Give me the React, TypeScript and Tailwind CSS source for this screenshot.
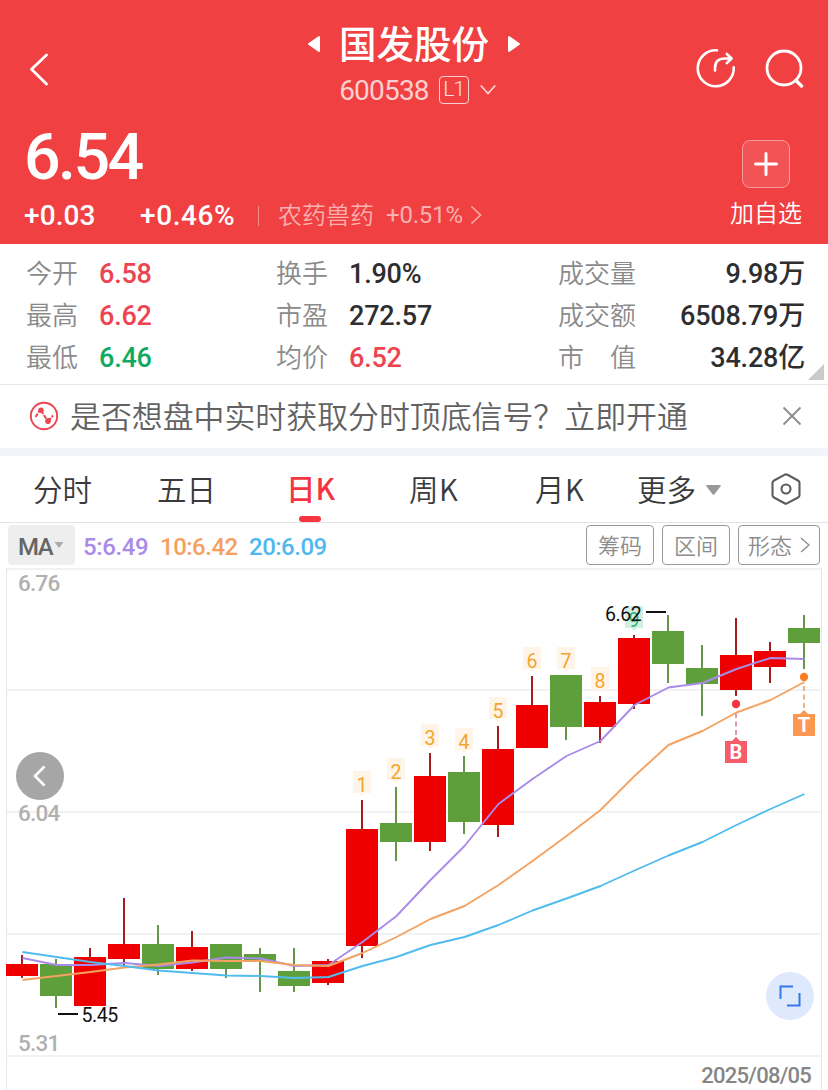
import * as React from "react";

const CJK = "font-['Noto_Sans_CJK_SC',sans-serif]";
const NUM = "font-['Roboto','Noto_Sans_CJK_SC',sans-serif]";

type Candle = {
  up: boolean;
  high: number;
  top: number;
  bottom: number;
  low: number;
};

const candle = (
  up: boolean,
  high: number,
  top: number,
  bottom: number,
  low: number
): Candle => ({ up, high, top, bottom, low });

const candles: Candle[] = [
  candle(true, 955, 964, 976, 978),
  candle(false, 959, 964, 996, 1008),
  candle(true, 948, 957, 1006, 1006),
  candle(true, 898, 944, 959, 968),
  candle(false, 925, 944, 969, 975),
  candle(true, 931, 947, 969, 971),
  candle(false, 944, 944, 969, 978),
  candle(false, 948, 954, 962, 992),
  candle(false, 948, 971, 986, 992),
  candle(true, 959, 961, 983, 985),
  candle(true, 800, 829, 946, 958),
  candle(false, 787, 823, 842, 861),
  candle(true, 753, 776, 842, 851),
  candle(false, 756, 772, 822, 834),
  candle(true, 726, 749, 825, 837),
  candle(true, 676, 705, 748, 748),
  candle(false, 675, 675, 727, 740),
  candle(true, 696, 702, 727, 743),
  candle(true, 635, 638, 704, 709),
  candle(false, 615, 631, 664, 683),
  candle(false, 645, 668, 684, 716),
  candle(true, 618, 655, 690, 696),
  candle(true, 642, 651, 667, 683),
  candle(false, 615, 628, 643, 669),
];

const averages = [
  {
    color: "#a98be8",
    values: [
      958, 965, 965, 963, 966, 962.5, 957.5, 958.5, 966, 965, 942, 916, 880,
      846, 804, 779, 756, 741, 705, 687.5, 683, 669, 658, 659,
    ],
  },
  {
    color: "#f3a261",
    values: [
      980, 976, 972, 967.5, 964.5, 960.5, 961, 961, 965, 966, 953, 937, 919,
      906, 885, 861, 836, 810, 776, 745, 731, 712.5, 700, 682,
    ],
  },
  {
    color: "#50bcee",
    values: [
      952, 957, 962, 966, 970.5, 973, 975.5, 976, 978, 977, 966, 957, 945, 937,
      925, 910.5, 898.5, 886, 870.5, 855.5, 842, 825, 809, 794,
    ],
  },
];

// top edge of every sequence badge, starting from candle 10
const badges = [771, 758, 724, 728, 697, 647, 647, 667, 606];

const centerX = (i: number) => 22 + i * 34;

function Header() {
  return (
    <header className="h-[244px] bg-[#f04042] text-white">
      <div className="flex h-[124px] justify-between">
        <div className="w-[168px]">
          <svg className="ml-7 mt-[50px] h-10 w-6" viewBox="0 0 24 40" fill="none" stroke="#fff" strokeWidth="2.8" strokeLinecap="round" strokeLinejoin="round">
            <path d="M18.5 5 3.500 19.200 18.500 34" />
          </svg>
        </div>
        <div className="flex flex-col items-center">
          <div className="mt-[16px] flex h-[52px] items-center gap-[18px]">
            <svg className="mt-[4px] h-[18px] w-4" viewBox="0 0 16 18" fill="#fff" stroke="#fff" strokeWidth="2" strokeLinejoin="round">
              <path d="M14 2v14L4 9z" />
            </svg>
            <h1 className={`${CJK} text-[37.5px] leading-[52px] font-medium`}>国发股份</h1>
            <svg className="mt-[4px] h-[18px] w-4" viewBox="0 0 16 18" fill="#fff" stroke="#fff" strokeWidth="2" strokeLinejoin="round">
              <path d="M2 2v14l10-7z" />
            </svg>
          </div>
          <div className="mt-[6px] flex h-[32px] items-center pl-[7px]">
            <span className={`${NUM} pt-[2px] text-[28px] tracking-[-0.8px] text-[#fbcfcf]`}>600538</span>
            <span className={`${NUM} ml-[10px] flex h-7 w-[30px] items-center justify-center rounded-[4px] border border-[#fbd0d0] text-[21px] font-light tracking-[-0.8px] text-[#fde0e0]`}>
              L1
            </span>
            <svg className="ml-[11px] h-4 w-4" viewBox="0 0 16 16" fill="none" stroke="#fbd0d0" strokeWidth="1.8">
              <path d="m.8 3.5 7.2 8 7.2-8" />
            </svg>
          </div>
        </div>
        <div className="flex w-[168px] justify-end gap-7 pr-6 pt-[48px]">
          <svg className="h-10 w-10" viewBox="0 0 40 40" fill="none" stroke="#fff" strokeWidth="2.6" strokeLinecap="round" strokeLinejoin="round">
            <path d="M21 2.300A18 18 0 1 0 37.700 19.200" />
            <path d="M19 22.500v-2.300c0-7 3.400-9.700 10-9.700h6M30.800 6l4.800 4.500-4.800 4.500" />
          </svg>
          <svg className="h-10 w-10" viewBox="0 0 40 40" fill="none" stroke="#fff" strokeWidth="2.8" strokeLinecap="round">
            <circle cx="20" cy="20" r="17" />
            <path d="m32 32.500 5.500 5.500" strokeWidth="3.4" />
          </svg>
        </div>
      </div>
      <div className="flex justify-between">
        <div>
          <p className={`${NUM} ml-6 mt-[-3px] h-[74px] text-[64.5px] leading-[72px] font-medium tracking-[-2.6px]`}>
            6.54
          </p>
          <div className={`${NUM} flex h-[42px] items-center text-[28px] font-medium`}>
            <span className="ml-6 w-[116px] tracking-[0.1px]">+0.03</span>
            <span className="w-[118px] tracking-[0.6px]">+0.46%</span>
            <span className="h-5 w-px bg-[#f58a8b]" />
            <span className={`${CJK} mt-[-4px] ml-[19px] text-[24px] font-[350] text-[#f8b0b0]`}>农药兽药</span>
            <span className="mt-[-2px] ml-[12px] text-[24px] font-normal tracking-[-0.2px] text-[#f8b0b0]">+0.51%</span>
            <svg className="mt-[-3px] ml-[7px] h-5 w-3" viewBox="0 0 12 20" fill="none" stroke="#f8b0b0" strokeWidth="1.6">
              <path d="m1.500 1.500 9 8.500-9 8.500" />
            </svg>
          </div>
        </div>
        <div className="mr-6 mt-4 flex w-[76px] flex-col items-center">
          <button className="flex h-12 w-12 items-center justify-center rounded-[8px] border border-[#f79b9c] bg-[#f25354]">
            <svg className="h-6 w-6" viewBox="0 0 24 24" stroke="#fff" strokeWidth="3" strokeLinecap="round">
              <path d="M12 1.500v21M1.500 12h21" />
            </svg>
          </button>
          <span className={`${CJK} mt-[7px] text-[24px] leading-[34px] font-[350]`}>加自选</span>
        </div>
      </div>
    </header>
  );
}

function Stat(props: { label: string; value: string; color?: string; wide?: boolean }) {
  const { label, value, color = "text-[#2e2e30]", wide } = props;
  return (
    <div className={`flex h-[42px] ${wide ? "justify-between" : "gap-[21px]"}`}>
      <span className={`${CJK} text-[26px] leading-[39px] font-[350] text-[#8a8a8a]`}>{label}</span>
      <span className={`${NUM} text-[27px] leading-[44px] font-medium tracking-[-0.2px] ${color}`}>{value}</span>
    </div>
  );
}

function Stats() {
  return (
    <section className="relative flex h-[141px] border-b border-[#e8e8ea] pl-[26px] pt-[8px]">
      <div className="w-[250px]">
        <Stat label="今开" value="6.58" color="text-[#ee4350]" />
        <Stat label="最高" value="6.62" color="text-[#ee4350]" />
        <Stat label="最低" value="6.46" color="text-[#0fa962]" />
      </div>
      <div className="w-[282px]">
        <Stat label="换手" value="1.90%" />
        <Stat label="市盈" value="272.57" />
        <Stat label="均价" value="6.52" color="text-[#ee4350]" />
      </div>
      <div className="w-[247px]">
        <Stat label="成交量" value="9.98万" wide />
        <Stat label="成交额" value="6508.79万" wide />
        <Stat label="市　值" value="34.28亿" wide />
      </div>
      <svg className="absolute bottom-[4px] right-[4px] h-4 w-4" viewBox="0 0 16 16" fill="#cacaca">
        <path d="M16 0v16H0z" />
      </svg>
    </section>
  );
}

function Notice() {
  return (
    <section className="flex h-[71px] items-center border-b-8 border-[#f2f4f9] pb-px pl-[29px]">
      <svg className="h-[30px] w-[30px]" viewBox="0 0 30 30" fill="none" stroke="#ee4350" strokeWidth="1.9">
        <circle cx="15" cy="15" r="13.2" />
        <path d="m6.500 16 4.300-6.500M12 9.500l5 8M19 20l5-5.500" strokeWidth="2" strokeDasharray="4.200 1.200" />
        <circle cx="12" cy="9.3" r="2.7" fill="#ee4350" stroke="none" />
        <circle cx="19" cy="20" r="2.9" fill="#ee4350" stroke="none" />
      </svg>
      <p className={`${CJK} mt-[-3px] ml-[11px] text-[30.9px] leading-[60px] font-[350] whitespace-nowrap text-[#626262]`}>
        是否想盘中实时获取分时顶底信号？立即开通
      </p>
      <svg className="ml-auto mr-[26px] h-5 w-5" viewBox="0 0 20 20" stroke="#8c8c8c" strokeWidth="1.8">
        <path d="m1.500 1.500 17 17M18.500 1.500l-17 17" />
      </svg>
    </section>
  );
}

function Tabs() {
  return (
    <nav className={`${CJK} flex h-[67px] items-center border-b border-[#e3e3e5] text-[29.5px] leading-[66px] font-[350] text-[#3a3a3c]`}>
      <span className="mt-[-3px] ml-[33px] w-[124px]">分时</span>
      <span className="mt-[-3px] w-[129px]">五日</span>
      <span className="relative w-[123px] font-medium text-[#f53541]">
        <span className="relative top-[-2px]">日K</span>
        <span className="absolute bottom-0 left-[13px] h-[6px] w-[22px] rounded-[3px] bg-[#f53541]" />
      </span>
      <span className="mt-[-3px] w-[126px] tracking-[0.5px]">周K</span>
      <span className="mt-[-3px] w-[102px] tracking-[0.5px]">月K</span>
      <span className="mt-[-3px]">更多</span>
      <svg className="ml-[10px] mt-[2px] h-[10px] w-[15px]" viewBox="0 0 15 10" fill="#999">
        <path d="M1 0h13q1.200 0 .6 1.200L8.500 9.300q-1 1-2 0L.4 1.200Q-.2 0 1 0z" />
      </svg>
      <svg className="ml-auto mr-[26px] h-8 w-8" viewBox="0 0 32 32" fill="none" stroke="#5c5c5e" strokeWidth="2.100" strokeLinejoin="round">
        <path d="M14.500 1.800q1.500-.8 3 0l10.500 5.700q1.500.8 1.500 2.500v12q0 1.700-1.500 2.500L17.500 30.200q-1.500.8-3 0L4 24.500q-1.500-.8-1.500-2.500V10q0-1.700 1.500-2.500z" />
        <circle cx="16" cy="16" r="4.500" />
      </svg>
    </nav>
  );
}

function Indicators() {
  const button =
    "flex h-10 justify-center rounded-[4px] border border-[#989898] text-[22px] leading-[37px] font-[350] text-[#8c8c8c]";
  return (
    <div className={`${NUM} flex h-[45px] items-start pl-2 pt-[2px] text-[24px] font-medium`}>
      <div className="flex h-10 w-[67px] items-center rounded-[4px] bg-[#eee] pl-[10px] text-[#666]">
        <span className="pt-[3px] tracking-[-1.5px]">MA</span>
        <svg className="ml-[2px] h-[6px] w-[10px]" viewBox="0 0 10 6" fill="#aaa">
          <path d="M.5 0h9L5.500 5.500h-1z" />
        </svg>
      </div>
      <span className="ml-2 w-[77px] leading-[44px] tracking-[-0.4px] text-[#a98be8]">5:6.49</span>
      <span className="w-[89px] leading-[44px] tracking-[-0.5px] text-[#f5a060]">10:6.42</span>
      <span className="leading-[44px] tracking-[-0.5px] text-[#50b8f0]">20:6.09</span>
      <div className={`${CJK} ml-auto mr-2 flex gap-2`}>
        <button className={`${button} w-[68px]`}>筹码</button>
        <button className={`${button} w-[68px]`}>区间</button>
        <button className={`${button} w-[82px] gap-2`}>
          形态
          <svg className="mt-[11px] h-4 w-[10px]" viewBox="0 0 10 16" fill="none" stroke="#909090" strokeWidth="1.5">
            <path d="m1 1 8 7-8 7" />
          </svg>
        </button>
      </div>
    </div>
  );
}

function TradeMark(props: { x: number; dot: number; top: number; label: string; color: string; dotColor: string; dash: string }) {
  const { x, dot, top, label, color, dotColor, dash } = props;
  return (
    <g>
      <circle cx={x} cy={dot} r="4.2" fill={dotColor} />
      <path d={`M${x} ${dot + 9}V${top - 4}`} stroke={dash} strokeWidth="2" strokeDasharray="5 3.5" />
      <path d={`M${x - 11} ${top}h7l4-4 4 4h7v22h-22z`} fill={color} />
      <text x={x} y={top + 18} textAnchor="middle" fontSize="20" fontWeight="700" fill="#fff">
        {label}
      </text>
    </g>
  );
}

function Chart() {
  return (
    <section className="relative h-[522px]">
      <svg className={`${NUM} block h-[522px] w-[828px]`} viewBox="0 568 828 522">
        <g stroke="#f2f2f3" strokeWidth="2">
          {[569, 690, 812, 934, 1056].map((y) => (
            <path d={`M6 ${y}H822`} key={y} />
          ))}
        </g>
        <path d="M6.5 568V1090M821.5 568V1090" stroke="#e7e7e9" />
        <g fontSize="22.5" fontWeight="500" fill="#b0b0b0" letterSpacing="-0.8">
          <text x="18" y="591">6.76</text>
          <text x="18" y="821">6.04</text>
          <text x="18" y="1051">5.31</text>
        </g>

        {candles.map((item, i) => (
          <g key={i}>
            <path d={`M${centerX(i)} ${item.high}V${item.low}`} stroke={item.up ? "#a81c20" : "#67964b"} strokeWidth="2" />
            <rect x={centerX(i) - 16} y={item.top} width="32" height={item.bottom - item.top} fill={item.up ? "#ee0000" : "#5f9f3b"} />
          </g>
        ))}

        {averages.map((line) => (
          <polyline
            key={line.color}
            points={line.values.map((y, i) => `${centerX(i) + 0.5},${y}`).join(" ")}
            fill="none"
            stroke={line.color}
            strokeWidth="1.9"
            strokeLinejoin="round"
          />
        ))}

        {badges.map((y, i) => {
          const x = centerX(i + 10);
          const last = i === badges.length - 1;
          return (
            <g key={i}>
              <path d={`M${x - 9} ${y}h18v22h-6l-3 3-3-3h-6z`} fill={last ? "#d2efe2" : "#fef4e8"} />
              <text x={x} y={y + 21} textAnchor="middle" fontSize="19.5" fill={last ? "#1fb573" : "#f2a62c"}>
                {i + 1}
              </text>
            </g>
          );
        })}

        <g fontSize="19.5" fill="#111" letterSpacing="-0.4">
          <text x="605" y="620.5">6.62</text>
          <text x="81.5" y="1022">5.45</text>
        </g>
        <path d="M646 612h20M58 1014h20" stroke="#111" strokeWidth="2" />

        <TradeMark x={736} dot={704} top={741} label="B" color="#f75d69" dotColor="#f53541" dash="#dd9da2" />
        <TradeMark x={804} dot={677} top={714} label="T" color="#fd9850" dotColor="#fd7f22" dash="#e8b48e" />

        <text x="811" y="1083" textAnchor="end" fontSize="22" fontWeight="500" fill="#868686" letterSpacing="-0.75">
          2025/08/05
        </text>
      </svg>
      <button className="absolute left-4 top-[184px] flex h-12 w-12 items-center justify-center rounded-full bg-[#a6a6a6]">
        <svg className="h-6 w-6" viewBox="0 0 24 24" fill="none" stroke="#fff" strokeWidth="2.6">
          <path d="M16.500 2.500 7 12l9.500 9.500" />
        </svg>
      </button>
      <button className="absolute right-[14px] top-[404px] flex h-12 w-12 items-center justify-center rounded-full bg-[#dfe9fe]">
        <svg className="h-6 w-6" viewBox="0 0 24 24" fill="none" stroke="#3578e8" strokeWidth="2">
          <path d="M2.500 15V2.500H15M21.500 9v12.500H9" />
        </svg>
      </button>
    </section>
  );
}

export default function App() {
  return (
    <div className="h-[1090px] w-[828px] overflow-hidden bg-white">
      <Header />
      <Stats />
      <Notice />
      <Tabs />
      <Indicators />
      <Chart />
    </div>
  );
}
